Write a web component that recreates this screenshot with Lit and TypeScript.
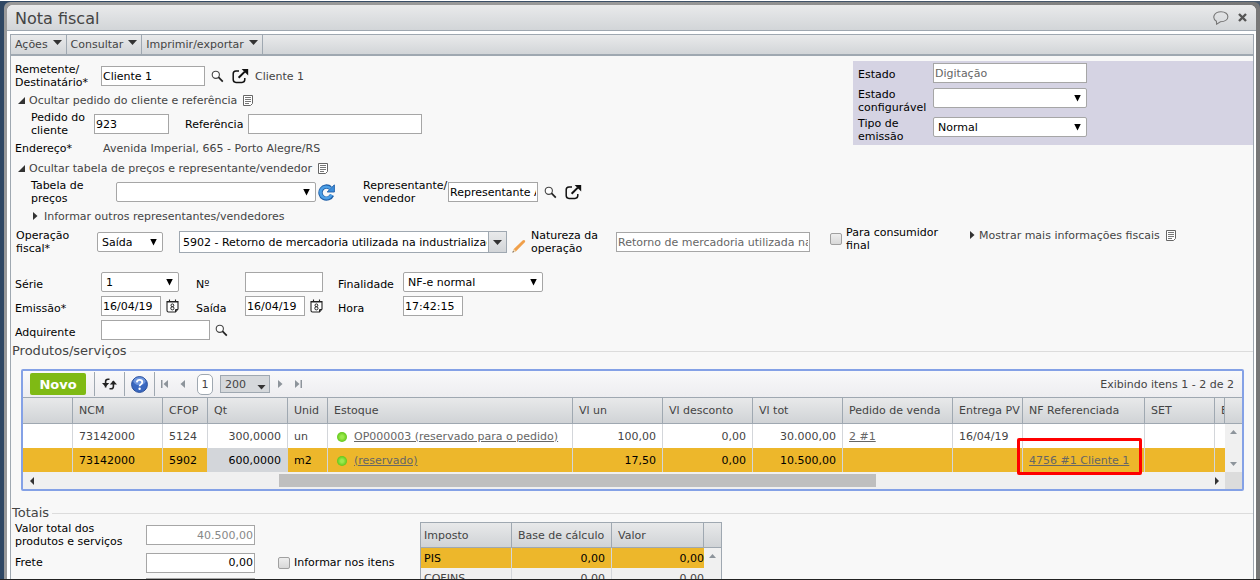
import { LitElement, html, css, svg, nothing } from "lit";
import { customElement } from "lit/decorators.js";
import { classMap } from "lit/directives/class-map.js";

const searchIcon = html`<svg class="icon" width="13" height="13" viewBox="0 0 13 13" fill="none" aria-hidden="true">
  <circle cx="4.8" cy="4.8" r="3.6" fill="#fff" stroke="#444" stroke-width="1.1" />
  <path d="M7.4 7.2 11.8 11.6" stroke="#222" stroke-width="1.7" />
</svg>`;

const externalIcon = html`<svg class="icon" width="17" height="16" viewBox="0 0 17 16" fill="none" aria-hidden="true">
  <path d="M7 3H4Q1.2 3 1.2 5.8V11.6Q1.2 14.4 4 14.4H10Q12.8 14.4 12.8 11.6V10" stroke="#111" stroke-width="1.5" />
  <path d="M6.6 9.8 12.8 3.6" stroke="#111" stroke-width="2" />
  <path d="M9.6 1H16.2V7.6Z" fill="#111" />
</svg>`;

const noteIcon = html`<svg class="icon" width="10" height="11" viewBox="0 0 10 11" fill="none" aria-hidden="true">
  <path d="M.5.5H9.5V8.5L7.5 10.5H.5Z" fill="#fff" stroke="#666" />
  <path d="M2 2.500H8M2 4.500H8M2 6.500H8M2 8.500H6" stroke="#777" />
</svg>`;

const calendarIcon = html`<svg class="icon" width="13" height="14" viewBox="0 0 13 14" fill="none" aria-hidden="true">
  <path d="M1 2.5H12V10L9.5 13H2.5Q1 13 1 11.5Z" fill="#fff" stroke="#222" stroke-width="1.1" />
  <path d="M1 2.800H12" stroke="#222" stroke-width="1.4" />
  <path d="M3.5 .6V3M9.5 .6V3" stroke="#222" stroke-width="1.1" />
  <circle cx="6.4" cy="6.3" r="1.4" stroke="#222" /><circle cx="6.4" cy="9.3" r="1.6" stroke="#222" />
  <path d="M9.5 13V10.5H12" stroke="#222" />
</svg>`;

const refreshIcon = html`<svg width="17" height="17" viewBox="0 0 17 17" fill="none" aria-hidden="true">
  <path d="M14 11A6 6 0 1 1 12.4 4" stroke="#1f5fa8" stroke-width="4.4" />
  <path d="M16.4 .8V8H9.2Z" fill="#3b8ddb" stroke="#1f5fa8" stroke-width=".9" />
  <path d="M13.6 10.800A5.8 5.8 0 1 1 12.4 4.4" stroke="#4c9fe6" stroke-width="2.6" />
</svg>`;

const pencilIcon = html`<svg width="14" height="14" viewBox="0 0 14 14" aria-hidden="true">
  <path d="M.6 13.4 1.8 10 10.6 1.4Q12 .4 13 1.6 13.6 2.6 12.6 3.6L4 12.2Z" fill="#f0a04b" />
  <path d="M.6 13.4 1.8 10 4 12.2Z" fill="#ecd9b8" /><path d="M.4 13.6 1 12 2 13Z" fill="#333" />
</svg>`;

const expanded = html`<svg width="7" height="7" viewBox="0 0 7 7" aria-hidden="true"><path d="M7 0V7H0Z" fill="#333" /></svg>`;
const collapsed = html`<svg width="5" height="8" viewBox="0 0 5 8" aria-hidden="true"><path d="M0 0 4.5 4 0 8Z" fill="#333" /></svg>`;

const arrow = (d: string, w = 7, h = 8, color = "#8d949b") =>
  html`<svg width=${w} height=${h} viewBox="0 0 ${w} ${h}" aria-hidden="true">${svg`<path d=${d} fill=${color} />`}</svg>`;

interface Row {
  ncm: string; cfop: string; qt: string; unid: string; stock: string;
  unit: string; discount: string; total: string; order: string; date: string; ref: string;
}

const rows: Row[] = [
  { ncm: "73142000", cfop: "5124", qt: "300,0000", unid: "un", stock: "OP000003 (reservado para o pedido)", unit: "100,00", discount: "0,00", total: "30.000,00", order: "2 #1", date: "16/04/19", ref: "" },
  { ncm: "73142000", cfop: "5902", qt: "600,0000", unid: "m2", stock: "(reservado)", unit: "17,50", discount: "0,00", total: "10.500,00", order: "", date: "", ref: "4756 #1 Cliente 1" },
];

const columns: [string, string][] = [
  ["", "c50"], ["NCM", "c90"], ["CFOP", "c45"], ["Qt", "c80"], ["Unid", "c40"], ["Estoque", ""],
  ["Vl un", "c90"], ["Vl desconto", "c90"], ["Vl tot", "c90"], ["Pedido de venda", "c110"],
  ["Entrega PV", "c70"], ["NF Referenciada", "c122"], ["SET", "c70"], ["E", "c10"],
];

@customElement("app-root")
export class AppRoot extends LitElement {
  static styles = css`
    :host { display: block; height: 100vh; overflow: hidden; box-sizing: border-box; font: 11px/13px "DejaVu Sans", Verdana, sans-serif; color: #000;
      border-top: 1px solid #fff; border-bottom: 1px solid #222; background: linear-gradient(90deg, #2f4763, #4b5a6c); }
    *, *::before, *::after { box-sizing: border-box; }
    svg { display: block; flex: none; }
    a { color: #666; }
    button { font: inherit; color: inherit; border: 0; padding: 0; background: none; display: inline-flex; align-items: center; }
    .frame { height: 100%; margin: 1px 0 0 4px; padding: 3px 4px 0 3px; background: linear-gradient(90deg, #999 0 50%, #777); border-radius: 6px 6px 0 0; }
    .window { height: 100%; background: #fff; border-radius: 6px 6px 0 0; display: flex; flex-direction: column; }
    .title { height: 26px; flex: none; display: flex; align-items: center; gap: 9px; padding: 3px 9px 0 8px; border-bottom: 1px solid #9fa8b1;
      background: linear-gradient(#e9eaeb, #d2d5d8); border-radius: 6px 6px 0 0; }
    .title button { margin-bottom: 3px; }
    .title h1 { margin: 0; flex: 1; font-size: 16px; line-height: 20px; font-weight: 400; color: #444; }
    .body { flex: 1; margin: 3px 2px 0 3px; border: 1px solid #9fa8b1; border-bottom: 0; background: #f8f8f8; min-height: 0; overflow: hidden; }
    .menu { display: flex; height: 21px; border-bottom: 2px solid #9fa8b1; background: linear-gradient(#e9eaeb, #d2d5d8); color: #444; }
    .menu button { gap: 5px; padding: 0 4px; border-right: 1px solid #9fa8b1; }
    .menu svg { margin-bottom: 4px; }

    .top { display: flex; justify-content: space-between; align-items: flex-start; padding-top: 5px; }
    .left { display: grid; gap: 2px; padding: 2px 0 0 4px; }
    .row { display: flex; align-items: center; height: 26px; }
    .row.short { height: 18px; color: #444; }
    .row .icon { margin-left: 6px; }
    .sub { padding-left: 16px; }
    .toggle { gap: 4px; margin-left: 3px; color: #444; white-space: nowrap; }
    .sub .toggle { gap: 6px; margin-left: 2px; }
    .w63 { width: 63px; } .w86 { width: 86px; } .w85 { width: 85px; } .w81 { width: 81px; } .w88 { width: 88px; }
    .ml16 { margin-left: 16px; } .ml28 { margin-left: 28px; } .ml20 { margin-left: 20px; }
    .black { color: #000; }
    .reload { margin-left: 2px; }
    .open { margin-left: 2px; }
    .note { margin-left: 6px; color: #444; }

    input:not([type="checkbox"]), select { font: inherit; color: #000; height: 20px; border: 1px solid #a6a6a6; background: #fff; border-radius: 0; padding: 0 1px; margin: 0; width: 100%; min-width: 0; outline: 0; }
    select { appearance: none; border-radius: 2px; padding: 0 20px 0 4px; }
    input.soft:not([type="checkbox"]) { color: #666; }
    input.faint:not([type="checkbox"]) { color: #888; }
    input.num { text-align: right; }
    .field { display: grid; flex: none; }
    .field > * { grid-area: 1 / 1; }
    .pick::after { content: ""; grid-area: 1 / 1; place-self: center end; margin-right: 6px; width: 7px; height: 7px; background: #000; clip-path: polygon(0 0, 100% 0, 50% 100%); pointer-events: none; }
    .f60 { width: 60px; } .f66 { width: 66px; } .f75 { width: 75px; } .f78 { width: 78px; } .f90 { width: 90px; } .f104 { width: 104px; } .f109 { width: 109px; }
    .f140 { width: 140px; } .f174 { width: 174px; } .f154 { width: 154px; } .f194 { width: 194px; } .f200 { width: 200px; }
    input[type="checkbox"] { appearance: none; width: 12px; height: 12px; margin: 0; border: 1px solid #a0a0a0; border-radius: 2px; background: linear-gradient(#eee, #d8d8d8); flex: none; }
    .check { display: flex; gap: 4px; align-items: center; }

    .state { width: 400px; padding: 2px 0 2px 5px; background: #d5d3e3; display: grid; grid-template-columns: 75px 1fr; grid-template-rows: 22px 26px 26px; gap: 3px 0; align-items: start; }
    .state label { align-self: center; max-width: 70px; }

    .fiscal { display: flex; align-items: center; height: 26px; margin: 4px 0 0 5px; }
    .combo { display: flex; flex: none; width: 328px; height: 22px; margin-left: 16px; border: 1px solid #9fa8b1; background: #fff; }
    .combo input:not([type="checkbox"]) { border: 0; padding-left: 3px; }
    .combo button { width: 18px; flex: none; justify-content: center; border-left: 1px solid #9fa8b1; background: linear-gradient(#e9eaeb, #d2d5d8); }
    .fiscal .pencil { margin: 8px 5px 0 5px; }
    .fiscal .check { margin-bottom: 6px; }
    .more { display: flex; align-items: center; gap: 6px; margin: 0 0 14px 29px; }

    .issue { display: grid; grid-template-columns: 86px 95px 49px 93px 65px 1fr; gap: 4px 0; align-items: center; margin: 17px 0 0 4px; }
    .issue label { height: 15px; padding-top: 3px; }
    .cell { display: flex; align-items: center; gap: 5px; }

    .section { display: flex; align-items: center; gap: 3px; margin: 2px 0 0 1px; font-size: 13px; line-height: 18px; color: #444; }
    .section h2 { margin: 0; font: inherit; }
    .section::after { content: ""; flex: 1; height: 1px; background: #dcdcdc; }
    .totals-head { margin-top: 13px; }

    .panel { position: relative; margin: 9px 9px 0 10px; border: 2px solid #84a1e6; border-radius: 2px; background: #fff; }
    .bar { display: flex; align-items: center; height: 27px; padding: 0 8px 0 7px; border-bottom: 1px solid #9fa8b1; background: linear-gradient(#f9f9fa, #ededf0); }
    .bar .new { width: 56px; height: 22px; justify-content: center; border-radius: 2px; background: #7fba14; color: #fff; font-weight: 700; font-size: 13px; margin-right: 8px; }
    .bar .tool { width: 30px; height: 24px; justify-content: center; border-left: 1px solid #9fa8b1; }
    .pager { display: flex; align-items: center; height: 24px; border-left: 1px solid #9fa8b1; padding-left: 6px; gap: 12px; }
    .page { width: 16px; height: 21px; border: 1px solid #9fa8b1; border-radius: 5px; background: #fff; display: grid; place-items: center; color: #444; }
    .pager .field { width: 50px; margin-left: -5px; margin-right: -4px; }
    .pager select { height: 18px; border-color: #9fa8b1; background: #d5d8db; color: #444; border-radius: 0; }
    .pager .pick::after { height: 5px; width: 9px; margin-right: 4px; margin-top: 6px; background: #333; }
    .count { margin-left: auto; color: #444; }
    .view { display: grid; grid-template-columns: minmax(0, 1fr) 17px; }
    table { border-collapse: separate; border-spacing: 0; table-layout: fixed; width: 100%; color: #444; }
    th, td { padding: 0 6px; text-align: left; font-weight: 400; white-space: nowrap; overflow: hidden; height: 24px; border-right: 1px solid #d3d6da; }
    th { height: 26px; border-right-color: #9fa8b1; border-bottom: 1px solid #9fa8b1; background: linear-gradient(#e8e9ea, #d0d3d6); }
    .r { text-align: right; }
    .on td { background: #edb72b; color: #000; }
    .on td.hot { background: #d3d6da; }
    .c10 { width: 10px; padding-right: 0; } .c40 { width: 40px; } .c45 { width: 45px; } .c50 { width: 50px; } .c70 { width: 70px; } .c80 { width: 80px; } .c90 { width: 90px; } .c110 { width: 110px; } .c122 { width: 122px; }
    td:last-child { border-right: 0; }
    .dot { display: inline-block; width: 10px; height: 10px; margin: 0 7px 0 3px; border-radius: 50%; vertical-align: -2px; background: radial-gradient(#9bea4e 20%, #63c81b 70%); }
    .vbar { display: flex; flex-direction: column; }
    .vhead { height: 26px; border-bottom: 1px solid #9fa8b1; background: linear-gradient(#e8e9ea, #d0d3d6); }
    .vtrack { flex: 1; display: flex; flex-direction: column; justify-content: space-between; align-items: center; padding: 6px 0; background: #f0f0f0; }
    .hbar { display: grid; grid-template-columns: 17px 1fr 17px 17px; align-items: center; justify-items: center; height: 17px; background: #f0f0f0; }
    .track { width: 100%; display: grid; grid-template-columns: 239fr 597fr 332fr; }
    .thumb { grid-column: 2; height: 13px; background: #bfbfbf; }
    .corner { width: 100%; height: 17px; background: #dcdcdc; }
    .mark { position: absolute; right: 100px; bottom: 14px; width: 125px; height: 37px; border: 3px solid #f00; border-radius: 2px; pointer-events: none; }

    .totals { display: flex; align-items: flex-start; }
    .sums { display: grid; grid-template-columns: 131px 109px auto; row-gap: 2px; grid-template-rows: 26px 25px 22px; align-items: center; padding-left: 4px; width: 409px; }
    .sums .check { margin-left: 23px; }
    .tax { width: 302px; border: 1px solid #9fa8b1; display: grid; grid-template-columns: 1fr 17px; background: #f0f0f0; }
    .tax th, .tax td { height: 20px; }
    .tax th { height: 25px; }
    .tax th:first-child, .tax td:first-child { padding-left: 3px; width: 91px; }
    .tax th:nth-child(2) { width: 100px; }
    .tax td:last-child { padding-right: 0; }
    .tax .vhead { height: 25px; }
  `;

  private input(id: string, width: string, value = "", cls = "") {
    return html`<span class="field ${width}"><input class=${cls} id=${id} type="text" .value=${value} /></span>`;
  }

  private select(id: string, width: string, value = "") {
    return html`<span class="field pick ${width}"><select id=${id}><option>${value}</option></select></span>`;
  }

  private iconButton(name: string, icon: unknown, cls = "") {
    return html`<button type="button" class=${cls} aria-label=${name}>${icon}</button>`;
  }

  private renderTop() {
    return html`<div class="top">
      <div class="left">
        <div class="row">
          <label class="w86" for="remetente">Remetente/<br />Destinatário*</label>
          ${this.input("remetente", "f104", "Cliente 1")}
          ${this.iconButton("Pesquisar", searchIcon)}${this.iconButton("Abrir", externalIcon, "open")}
          <span class="note">Cliente 1</span>
        </div>
        <div class="row short"><button type="button" class="toggle">${expanded}Ocultar pedido do cliente e referência</button>${noteIcon}</div>
        <div class="row sub">
          <label class="w63" for="pedido">Pedido do<br />cliente</label>
          ${this.input("pedido", "f75", "923")}
          <label class="w63 ml16" for="referencia">Referência</label>
          ${this.input("referencia", "f174")}
        </div>
        <div class="row short"><span class="w88 black">Endereço*</span><span>Avenida Imperial, 665 - Porto Alegre/RS</span></div>
        <div class="row short"><button type="button" class="toggle">${expanded}Ocultar tabela de preços e representante/vendedor</button>${noteIcon}</div>
        <div class="row sub">
          <label class="w85" for="tabela">Tabela de<br />preços</label>
          ${this.select("tabela", "f200")}
          ${this.iconButton("Atualizar", refreshIcon, "reload")}
          <label class="w85 ml28" for="representante">Representante/<br />vendedor</label>
          ${this.input("representante", "f90", "Representante ABC")}
          ${this.iconButton("Pesquisar", searchIcon)}${this.iconButton("Abrir", externalIcon, "open")}
        </div>
        <div class="row short sub"><button type="button" class="toggle">${collapsed}Informar outros representantes/vendedores</button></div>
      </div>
      <div class="state">
        <label for="estado">Estado</label>${this.input("estado", "f154", "Digitação", "soft")}
        <label for="configuravel">Estado configurável</label>${this.select("configuravel", "f154")}
        <label for="tipo">Tipo de emissão</label>${this.select("tipo", "f154", "Normal")}
      </div>
    </div>`;
  }

  private renderFiscal() {
    return html`<div class="fiscal">
      <label class="w81" for="operacao">Operação<br />fiscal*</label>
      ${this.select("operacao", "f66", "Saída")}
      <span class="combo">
        <input type="text" aria-label="Código da operação" .value=${"5902 - Retorno de mercadoria utilizada na industrialização por encomenda"} />
        <button type="button" aria-label="Abrir lista">${arrow("M0 0H9L4.5 5Z", 9, 5, "#333")}</button>
      </span>
      ${this.iconButton("Editar", pencilIcon, "pencil")}
      <label class="w85" for="natureza">Natureza da<br />operação</label>
      ${this.input("natureza", "f194", "Retorno de mercadoria utilizada na industrialização", "soft")}
      <label class="check ml20"><input type="checkbox" /><span>Para consumidor<br />final</span></label>
      <span class="more"><button type="button" class="toggle">${collapsed}Mostrar mais informações fiscais</button>${noteIcon}</span>
    </div>
    <div class="issue">
      <label for="serie">Série</label>${this.select("serie", "f78", "1")}
      <label for="numero">Nº</label>${this.input("numero", "f78")}
      <label for="finalidade">Finalidade</label>${this.select("finalidade", "f140", "NF-e normal")}
      <label for="emissao">Emissão*</label><span class="cell">${this.input("emissao", "f60", "16/04/19")}${this.iconButton("Calendário", calendarIcon)}</span>
      <label for="saida">Saída</label><span class="cell">${this.input("saida", "f60", "16/04/19")}${this.iconButton("Calendário", calendarIcon)}</span>
      <label for="hora">Hora</label>${this.input("hora", "f60", "17:42:15")}
      <label for="adquirente">Adquirente</label><span class="cell">${this.input("adquirente", "f109")}${this.iconButton("Pesquisar", searchIcon)}</span>
    </div>`;
  }

  private renderItems() {
    const link = (text: string) => (text ? html`<a href="#">${text}</a>` : nothing);
    return html`<div class="section"><h2>Produtos/serviços</h2></div>
    <div class="panel">
      <div class="bar">
        <button type="button" class="new">Novo</button>
        <button type="button" class="tool" aria-label="Recarregar">
          <svg width="15" height="12" viewBox="0 0 15 12" fill="none"><path d="M7.500 1.300H6Q3.600 1.300 3.600 3.600V9.500M7.500 10.700H9Q11.400 10.700 11.400 8.400V3" stroke="#222" stroke-width="1.600" /><path d="M0 5H7.200L3.600 9ZM7.800 6.500H15L11.400 2.500Z" fill="#222" /></svg>
        </button>
        <button type="button" class="tool" aria-label="Ajuda">
          <svg width="17" height="17" viewBox="0 0 17 17"><circle cx="8.5" cy="8.5" r="7.9" fill="#3a68c0" stroke="#2a4f9a" /><ellipse cx="8.5" cy="5.2" rx="6" ry="4" fill="#6f96dd" /><path d="M5.8 6.4Q6 3.8 8.6 3.8 11.3 3.8 11.3 6.2 11.3 7.4 9.8 8.4 8.6 9.2 8.6 10.3" fill="none" stroke="#fff" stroke-width="1.8" /><circle cx="8.6" cy="12.8" r="1.2" fill="#fff" /></svg>
        </button>
        <div class="pager">
          <button type="button" aria-label="Primeira">${arrow("M0 0H1.5V8H0ZM7 0V8L2.5 4Z")}</button>
          <button type="button" aria-label="Anterior">${arrow("M5 0V8L.5 4Z", 5)}</button>
          <span class="page">1</span>
          <span class="field pick"><select aria-label="Itens por página"><option>200</option></select></span>
          <button type="button" aria-label="Próxima">${arrow("M0 0V8L4.5 4Z", 5)}</button>
          <button type="button" aria-label="Última">${arrow("M0 0V8L4.5 4ZM5.5 0H7V8H5.5Z")}</button>
        </div>
        <span class="count">Exibindo itens 1 - 2 de 2</span>
      </div>
      <div class="view">
        <table>
          <thead><tr>${columns.map(([name, width]) => html`<th class=${width}>${name}</th>`)}</tr></thead>
          <tbody>${rows.map((r, i) => html`<tr class=${classMap({ on: i === 1 })}>
            <td></td><td>${r.ncm}</td><td>${r.cfop}</td><td class="r hot">${r.qt}</td><td>${r.unid}</td>
            <td><span class="dot"></span>${link(r.stock)}</td>
            <td class="r">${r.unit}</td><td class="r">${r.discount}</td><td class="r">${r.total}</td>
            <td>${link(r.order)}</td><td>${r.date}</td><td>${link(r.ref)}</td><td></td><td></td>
          </tr>`)}</tbody>
        </table>
        <div class="vbar"><div class="vhead"></div><div class="vtrack">${arrow("M0 4H7L3.5 0Z", 7, 4)}${arrow("M0 0H7L3.5 4Z", 7, 4)}</div></div>
      </div>
      <div class="hbar">${arrow("M4 0V8L0 4Z", 4, 8, "#333")}<div class="track"><div class="thumb"></div></div>${arrow("M0 0V8L4 4Z", 4, 8, "#333")}<div class="corner"></div></div>
      <div class="mark"></div>
    </div>`;
  }

  private renderTotals() {
    return html`<div class="section totals-head"><h2>Totais</h2></div>
    <div class="totals">
      <div class="sums">
        <label for="valor">Valor total dos<br />produtos e serviços</label>${this.input("valor", "f109", "40.500,00", "num faint")}<span></span>
        <label for="frete">Frete</label>${this.input("frete", "f109", "0,00", "num")}
        <label class="check"><input type="checkbox" />Informar nos itens</label>
        <span></span><span class="field f109"><input type="text" class="num" aria-label="Seguro" /></span>
      </div>
      <div class="tax">
        <table>
          <thead><tr><th>Imposto</th><th>Base de cálculo</th><th>Valor</th></tr></thead>
          <tbody>
            <tr class="on"><td>PIS</td><td class="r">0,00</td><td class="r">0,00</td></tr>
            <tr><td>COFINS</td><td class="r">0,00</td><td class="r">0,00</td></tr>
          </tbody>
        </table>
        <div class="vbar"><div class="vhead"></div><div class="vtrack">${arrow("M0 4H7L3.5 0Z", 7, 4)}</div></div>
      </div>
    </div>`;
  }

  render() {
    const caret = arrow("M0 0H9L4.5 5Z", 9, 5, "#333");
    return html`<div class="frame"><div class="window">
      <header class="title">
        <h1>Nota fiscal</h1>
        <button type="button" aria-label="Comentários">
          <svg width="16" height="14" viewBox="0 0 16 14" fill="none"><path d="M3.4 10.2C-1.5 7 1 .7 8 .7 17 .7 17.500 10.700 7.400 10.700L3.600 13.200Z" stroke="#777" stroke-width="1.1" /></svg>
        </button>
        <button type="button" aria-label="Fechar">
          <svg width="9" height="9" viewBox="0 0 9 9"><path d="M1 1 8 8M8 1 1 8" stroke="#555" stroke-width="2.400" /></svg>
        </button>
      </header>
      <main class="body">
        <nav class="menu">
          <button type="button">Ações ${caret}</button><button type="button">Consultar ${caret}</button><button type="button">Imprimir/exportar ${caret}</button>
        </nav>
        ${this.renderTop()} ${this.renderFiscal()} ${this.renderItems()} ${this.renderTotals()}
      </main>
    </div></div>`;
  }
}
